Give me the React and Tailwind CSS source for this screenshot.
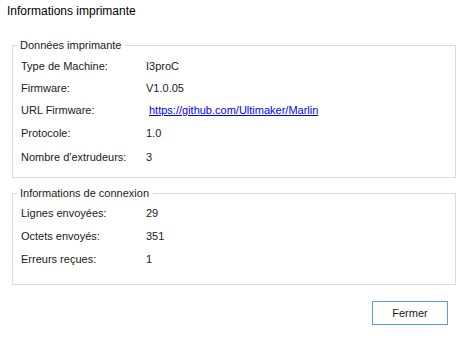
const rows1 = [
  { label: "Type de Machine:", value: "I3proC", h: "h-[22px]" },
  { label: "Firmware:", value: "V1.0.05", h: "h-[22px]" },
  { label: "URL Firmware:", value: "https://github.com/Ultimaker/Marlin", link: true, h: "h-[22px]" },
  { label: "Protocole:", value: "1.0", h: "h-[24px]" },
  { label: "Nombre d'extrudeurs:", value: "3", h: "h-[24px]" },
];

const rows2 = [
  { label: "Lignes envoyées:", value: "29", h: "h-[23px]" },
  { label: "Octets envoyés:", value: "351", h: "h-[23px]" },
  { label: "Erreurs reçues:", value: "1", h: "h-[22px]" },
];

function InfoRow({ label, value, link, h }) {
  return (
    <div className={`flex items-center pl-[8px] ${h}`}>
      <span className="w-[125px] shrink-0">{label}</span>
      {link ? (
        <a href="#" className="ml-[3px] text-[#0000ff] underline">{value}</a>
      ) : (
        <span>{value}</span>
      )}
    </div>
  );
}

function Group({ title, rows, className }) {
  return (
    <fieldset className={`mx-[12px] w-[444px] border border-[#dcdcdc] ${className}`}>
      <legend className="ml-[4px] px-[3px] leading-[14px] text-[#1a1a1a]">{title}</legend>
      {rows.map(r => <InfoRow key={r.label} {...r} />)}
    </fieldset>
  );
}

export default function App() {
  return (
    <div
      className="w-[466px] h-[341px] bg-white text-[11px] text-[#1a1a1a] overflow-hidden"
      style={{ fontFamily: '"Liberation Sans", Arial, sans-serif' }}
    >
      <div className="pt-[2px] pl-[7px] text-[12px] leading-[18px] text-black">Informations imprimante</div>
      <Group title="Données imprimante" rows={rows1} className="mt-[18px] h-[140px] pt-[3px]" />
      <Group title="Informations de connexion" rows={rows2} className="mt-[8px] h-[99px] pt-[2px]" />
      <div className="flex justify-end pr-[18px] pt-[16px]">
        <button className="w-[76px] h-[24px] border border-[#5a9fd4] bg-white text-[11px] text-[#1a1a1a]">
          Fermer
        </button>
      </div>
    </div>
  );
}
